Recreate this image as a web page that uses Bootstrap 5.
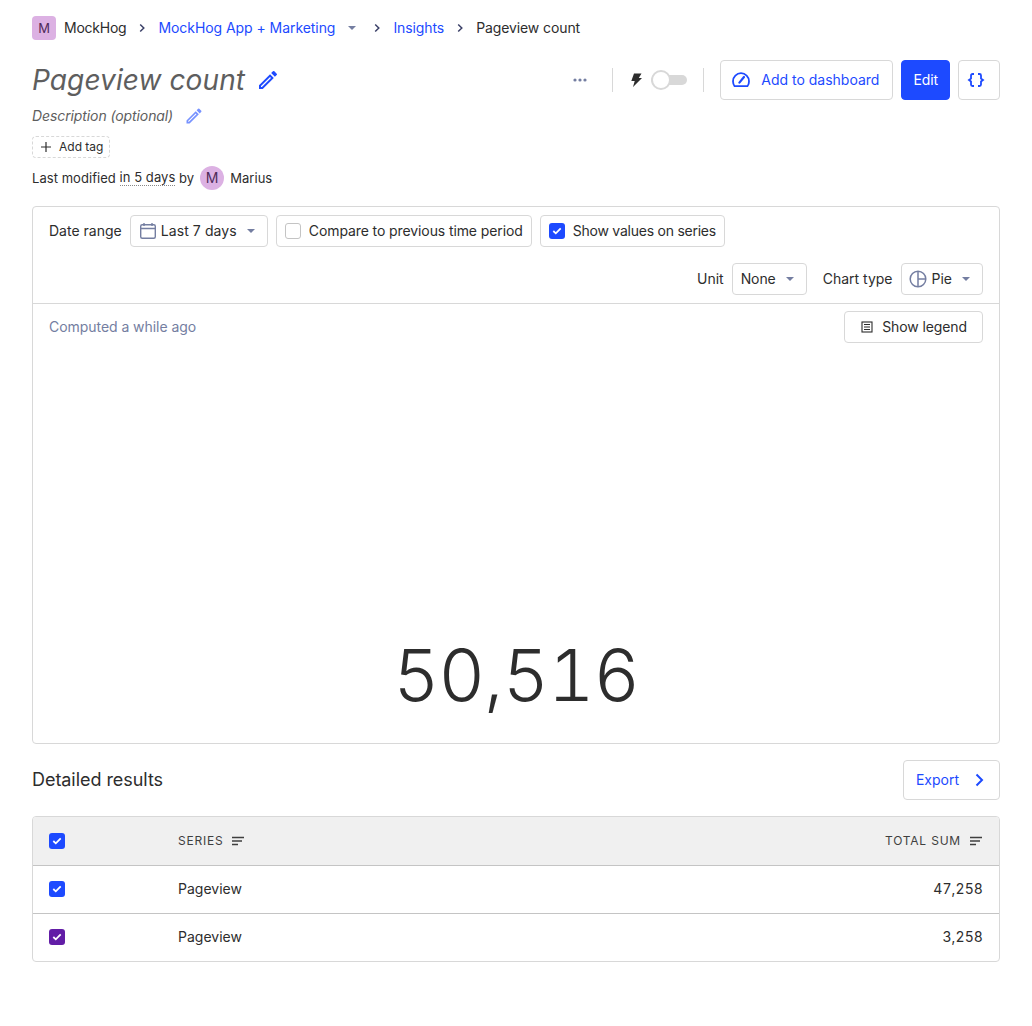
<!DOCTYPE html>
<html lang="en">
<head>
    <meta charset="UTF-8">
    <meta name="viewport" content="width=device-width, initial-scale=1.0">
    <title>Pageview count</title>
    <link href="https://cdn.jsdelivr.net/npm/bootstrap@5.3.0/dist/css/bootstrap.min.css" rel="stylesheet">
    <style>
        body { font-family: Inter, "Liberation Sans", sans-serif; font-size: 14px; line-height: 20px; color: #2d2d2d; background: #fff; }
        a { color: #1d4aff; text-decoration: none; }
        .page-wrap { padding: 16px 32px 0; }
        .tight { letter-spacing: -.1px; }
        .tighter { letter-spacing: -.24px; }
        .crumbs { height: 24px; letter-spacing: -.1px; }
        .crumbs a:first-of-type { letter-spacing: -.06px; }
        .crumb-sep { width: 32px; color: #3b4068; }
        .project-mark { width: 24px; height: 24px; border-radius: 4px; background: #dcb1e3; color: #4f2a5a; font-size: 13px; margin-right: 8px; }
        .caret-down { width: 0; height: 0; border-left: 4px solid transparent; border-right: 4px solid transparent; border-top: 4px solid #747ea1; }
        .crumb-caret { margin: 0 5px 0 13px; }
        .ctl-caret { margin: 0 4px 0 10px; }
        .title-row { margin-top: 20px; height: 40px; }
        .insight-title { font-size: 28px; font-style: italic; font-weight: 400; color: #5e5e5e; margin: 0; line-height: 40px; letter-spacing: .1px; }
        .pencil-big { margin-left: 3px; }
        .desc-row { height: 24px; margin-top: 4px; font-style: italic; color: #5e5e5e; letter-spacing: -.1px; }
        .pencil-small { margin-left: 11px; opacity: .6; }
        .tag-add { width: 78px; height: 22px; margin-top: 8px; border: 1px dashed #d8d8d8; border-radius: 4px; font-size: 12px; padding-left: 7px; gap: 7px; }
        .meta-row { height: 24px; margin-top: 8px; font-size: 13px; letter-spacing: .05px; }
        .dotted { border-bottom: 1px dotted #888; line-height: 15px; }
        .person-mark { width: 24px; height: 24px; border-radius: 50%; background: #dcb1e3; color: #4f2a5a; font-size: 14px; margin: 0 6px; }
        .v-rule { width: 1px; height: 24px; background: #d8d8d8; margin-left: 24px; }
        .v-rule.next { margin-left: 16px; }
        .bolt { margin-left: 14px; }
        .ph-btn { height: 40px; border: 1px solid #d8d8d8; border-radius: 4px; background: #fff; color: #1d4aff; padding: 0 12px; }
        .ph-btn.solid { background: #1d4aff; border-color: #1d4aff; color: #fff; padding: 0 11px; margin-left: 8px; letter-spacing: -.1px; }
        .btn-dash { margin-left: 16px; padding: 0 13px 0 10px; }
        .btn-dash span { margin-left: 10px; }
        .btn-code { margin-left: 8px; padding: 0 13px 0 7px; }
        .export-arrow { margin-left: 12px; }
        .toggle-track { width: 36px; height: 10px; border-radius: 5px; background: #d8d8d8; position: relative; }
        .toggle-knob { position: absolute; left: 0; top: -5px; width: 20px; height: 20px; border-radius: 50%; background: #fff; border: 2px solid #d8d8d8; }
        .chart-box { margin-top: 16px; height: 538px; border: 1px solid #d8d8d8; border-radius: 4px; }
        .chart-head { height: 97px; padding: 8px 16px 0; border-bottom: 1px solid #d8d8d8; }
        .ctl { height: 32px; border: 1px solid #d8d8d8; border-radius: 4px; background: #fff; padding: 0 8px; color: #2d2d2d; white-space: nowrap; }
        .date-text { letter-spacing: .1px; }
        .pie-ctl { padding-left: 7px; }
        .tick { width: 16px; height: 16px; border-radius: 3px; flex: none; }
        .tick-empty { border: 1px solid #c4c4c4; background: #fff; }
        .tick-on { background: #1d4aff; }
        .tick-purple { background: #621da6; }
        .row-two { margin-top: 16px; }
        .muted-slate { color: #747ea1; line-height: 32px; letter-spacing: -.05px; }
        .chart-sub { padding: 7px 16px 0; height: 40px; }
        .type-label { margin-left: 16px; }
        .pie-label { margin-left: 5px; }
        .legend-btn { padding: 0 15px; }
        .legend-btn span { margin-left: 8px; letter-spacing: -.1px; }
        .big-total { font-size: 72px; font-weight: 350; line-height: 1; font-variant-numeric: tabular-nums; letter-spacing: -1px; color: #2d2d2d; text-align: center; margin-top: 295px; }
        .results-head { margin-top: 16px; height: 40px; }
        .results-title { font-size: 18px; font-weight: 400; margin: 0; letter-spacing: -.05px; }
        .results-box { margin-top: 16px; border: 1px solid #d8d8d8; border-radius: 4px; overflow: hidden; }
        .res-row { height: 48px; padding: 0 16px 1px; border-bottom: 1px solid #c4c4c4; }
        .res-row:last-child { border-bottom: 0; height: 47px; }
        .res-row.res-top { background: #f0f0f0; height: 49px; padding-bottom: 0; font-size: 12px; letter-spacing: .8px; color: #3f3f3f; }
        .series-cell { margin-left: 113px; }
        .sort-mark { margin-left: 7px; }
        .num-cell { margin-left: auto; font-variant-numeric: tabular-nums; letter-spacing: .1px; }
    </style>
</head>
<body>
<div class="page-wrap">

    <div class="crumbs d-flex align-items-center">
        <span class="project-mark d-inline-flex align-items-center justify-content-center">M</span>
        <span class="tighter">MockHog</span>
        <span class="crumb-sep d-flex justify-content-center"><svg width="10" height="10" viewBox="0 0 10 10"><path d="M3.2 1.5 6.8 5 3.2 8.5" fill="none" stroke="currentColor" stroke-width="1.5"/></svg></span>
        <a href="#">MockHog App + Marketing</a>
        <span class="caret-down crumb-caret"></span>
        <span class="crumb-sep d-flex justify-content-center"><svg width="10" height="10" viewBox="0 0 10 10"><path d="M3.2 1.5 6.8 5 3.2 8.5" fill="none" stroke="currentColor" stroke-width="1.5"/></svg></span>
        <a href="#">Insights</a>
        <span class="crumb-sep d-flex justify-content-center"><svg width="10" height="10" viewBox="0 0 10 10"><path d="M3.2 1.5 6.8 5 3.2 8.5" fill="none" stroke="currentColor" stroke-width="1.5"/></svg></span>
        <span>Pageview count</span>
    </div>

    <div class="title-row d-flex align-items-center justify-content-between">
        <div class="d-flex align-items-center gap-2">
            <h1 class="insight-title">Pageview count</h1>
            <svg class="pencil-big" width="24" height="24" viewBox="0 0 24 24" fill="#1d4aff"><path d="M3 17.25V21h3.75L17.81 9.94l-3.75-3.75L3 17.25zM5.92 19H5v-.92l9.06-9.06.92.92L5.92 19zM20.71 7.04a1 1 0 0 0 0-1.41l-2.34-2.34a1 1 0 0 0-1.41 0l-1.83 1.83 3.75 3.75 1.83-1.83z"/></svg>
        </div>
        <div class="d-flex align-items-center">
            <svg width="16" height="16" viewBox="0 0 16 16" fill="#747ea1"><circle cx="3" cy="8" r="1.6"/><circle cx="8" cy="8" r="1.6"/><circle cx="13" cy="8" r="1.6"/></svg>
            <span class="v-rule"></span>
            <svg class="bolt" width="16" height="16" viewBox="0 0 16 16" fill="#2d2d2d"><path d="M7 1.500h7.500L11.800 6H15L6 15l1.700-6H4.300z"/></svg>
            <span class="toggle-track ms-2"><span class="toggle-knob"></span></span>
            <span class="v-rule next"></span>
            <button class="ph-btn btn-dash d-flex align-items-center">
                <svg width="20" height="20" viewBox="0 0 20 20" fill="none" stroke="#1d4aff" stroke-width="1.800"><path d="M3.600 16.200h12.800a7.600 7.600 0 0 0 1.600-5 8 8 0 1 0-16 0c0 1.900.6 3.600 1.600 5z"/><path d="M8.400 12.600 13 7" stroke-linecap="round" stroke-width="2.200"/></svg>
                <span>Add to dashboard</span>
            </button>
            <button class="ph-btn solid">Edit</button>
            <button class="ph-btn btn-code d-flex align-items-center">
                <svg width="20" height="20" viewBox="0 0 20 20" fill="none" stroke="#1d4aff" stroke-width="1.800"><path d="M8 4H6.500A1.500 1.500 0 0 0 5 5.500v3L3 10l2 1.500v3A1.500 1.500 0 0 0 6.500 16H8M12 4h1.500A1.500 1.500 0 0 1 15 5.500v3l2 1.500-2 1.500v3a1.500 1.500 0 0 1-1.500 1.500H12"/></svg>
            </button>
        </div>
    </div>

    <div class="desc-row d-flex align-items-center">
        <span>Description (optional)</span>
        <svg class="pencil-small" width="20" height="20" viewBox="0 0 24 24" fill="#1d4aff"><path d="M3 17.25V21h3.75L17.81 9.94l-3.75-3.75L3 17.25zM5.92 19H5v-.92l9.06-9.06.92.92L5.92 19zM20.71 7.04a1 1 0 0 0 0-1.41l-2.34-2.34a1 1 0 0 0-1.41 0l-1.83 1.83 3.75 3.75 1.83-1.83z"/></svg>
    </div>

    <div class="tag-add d-flex align-items-center">
        <svg width="12" height="12" viewBox="0 0 12 12" stroke="#2d2d2d" stroke-width="1.200"><path d="M6 1v10M1 6h10"/></svg>
        <span>Add tag</span>
    </div>

    <div class="meta-row d-flex align-items-center">
        <span>Last modified&nbsp;</span><span class="dotted">in 5 days</span><span>&nbsp;by</span>
        <span class="person-mark d-inline-flex align-items-center justify-content-center">M</span>
        <span>Marius</span>
    </div>

    <div class="chart-box">
        <div class="chart-head">
            <div class="d-flex align-items-center gap-2">
                <span>Date range</span>
                <span class="ctl d-flex align-items-center">
                    <svg width="18" height="18" viewBox="0 0 18 18" fill="none" stroke="#747ea1" stroke-width="1.400"><rect x="1.700" y="2.700" width="14.600" height="13.600" rx="1.500"/><path d="M1.700 6.500h14.600M5 1v3M13 1v3"/></svg>
                    <span class="ms-1 date-text">Last 7 days</span>
                    <span class="caret-down ctl-caret"></span>
                </span>
                <span class="ctl d-flex align-items-center">
                    <span class="tick tick-empty"></span>
                    <span class="ms-2 tight">Compare to previous time period</span>
                </span>
                <span class="ctl d-flex align-items-center">
                    <span class="tick tick-on d-flex align-items-center justify-content-center"><svg width="10" height="8" viewBox="0 0 10 8" fill="none" stroke="#fff" stroke-width="1.800"><path d="M1.300 4 3.800 6.300 8.700 1.400"/></svg></span>
                    <span class="ms-2 tighter">Show values on series</span>
                </span>
            </div>
            <div class="row-two d-flex align-items-center justify-content-end">
                <span>Unit</span>
                <span class="ctl d-flex align-items-center ms-2">
                    <span class="tight">None</span>
                    <span class="caret-down ctl-caret"></span>
                </span>
                <span class="type-label">Chart type</span>
                <span class="ctl pie-ctl d-flex align-items-center ms-2">
                    <svg width="18" height="18" viewBox="0 0 18 18" fill="none" stroke="#747ea1" stroke-width="1.500"><circle cx="9" cy="9" r="7.800"/><path d="M9 1.200v15.600M9 9h7.800"/></svg>
                    <span class="pie-label">Pie</span>
                    <span class="caret-down ctl-caret"></span>
                </span>
            </div>
        </div>
        <div class="chart-sub d-flex align-items-start justify-content-between">
            <span class="muted-slate">Computed a while ago</span>
            <button class="ctl legend-btn d-flex align-items-center">
                <svg width="14" height="14" viewBox="0 0 14 14" fill="none" stroke="#2d2d2d" stroke-width="1.100"><rect x="2" y="2" width="10" height="10"/><path d="M4 4.500h6M4 7h6M4 9.500h6"/></svg>
                <span>Show legend</span>
            </button>
        </div>
        <div class="big-total">50,516</div>
    </div>

    <div class="results-head d-flex align-items-center justify-content-between">
        <h2 class="results-title">Detailed results</h2>
        <button class="ph-btn d-flex align-items-center">
            <span>Export</span>
            <svg class="export-arrow" width="16" height="16" viewBox="0 0 16 16" fill="none" stroke="#1d4aff" stroke-width="2"><path d="M5.500 2.500 11 8 5.500 13.500"/></svg>
        </button>
    </div>

    <div class="results-box">
        <div class="res-row res-top d-flex align-items-center">
            <span class="tick tick-on d-flex align-items-center justify-content-center"><svg width="10" height="8" viewBox="0 0 10 8" fill="none" stroke="#fff" stroke-width="1.800"><path d="M1.300 4 3.800 6.300 8.700 1.400"/></svg></span>
            <span class="series-cell">SERIES</span>
            <svg class="sort-mark" width="14" height="14" viewBox="0 0 14 14" stroke="#3f3f3f" stroke-width="1.300"><path d="M1 3.500h12M1 7h10M1 10.500h6"/></svg>
            <span class="ms-auto">TOTAL SUM</span>
            <svg class="ms-2" width="14" height="14" viewBox="0 0 14 14" stroke="#3f3f3f" stroke-width="1.300"><path d="M1 3.500h12M1 7h10M1 10.500h6"/></svg>
        </div>
        <div class="res-row d-flex align-items-center">
            <span class="tick tick-on d-flex align-items-center justify-content-center"><svg width="10" height="8" viewBox="0 0 10 8" fill="none" stroke="#fff" stroke-width="1.800"><path d="M1.300 4 3.800 6.300 8.700 1.400"/></svg></span>
            <span class="series-cell">Pageview</span>
            <span class="num-cell">47,258</span>
        </div>
        <div class="res-row d-flex align-items-center">
            <span class="tick tick-purple d-flex align-items-center justify-content-center"><svg width="10" height="8" viewBox="0 0 10 8" fill="none" stroke="#fff" stroke-width="1.800"><path d="M1.300 4 3.800 6.300 8.700 1.400"/></svg></span>
            <span class="series-cell">Pageview</span>
            <span class="num-cell">3,258</span>
        </div>
    </div>

</div>
<script src="https://cdn.jsdelivr.net/npm/bootstrap@5.3.0/dist/js/bootstrap.bundle.min.js"></script>
</body>
</html>
